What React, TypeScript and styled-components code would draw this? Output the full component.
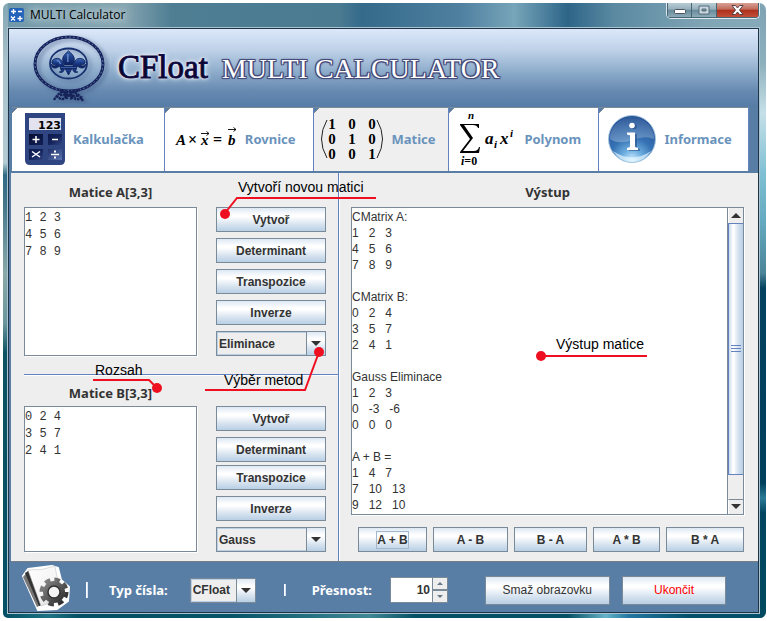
import React from "react";
import styled, { createGlobalStyle, css } from "styled-components";

const sans = '"Liberation Sans", Arial, sans-serif';
const human = '"Noto Sans", Tahoma, sans-serif';
const serif = '"Liberation Serif", "Times New Roman", serif';

const blue = "#587ea6";
const edge = "#7a8a99";
const accent = "#6382bf";
const panel = "#eeeeee";
const ink = "#333333";
const metal = "linear-gradient(180deg, #dde8f3 0%, #ffffff 30%, #ffffff 38%, #dbe6f1 68%, #b8cfe5 100%)";

const GlobalStyle = createGlobalStyle`
  *, *::before, *::after { box-sizing: border-box; }
  body { margin: 0; padding: 3px 1px 2px 3px; background: #fff; font-family: ${sans}; font-size: 12px; color: ${ink}; }
  button, input, select, textarea { font: inherit; color: inherit; margin: 0; border-radius: 0; outline: none; }
`;

const Frame = styled.div`
  padding: 0 6px 4px 4px;
  border-radius: 6px 7px 6px 5px;
  background:
    linear-gradient(180deg, #83a6b4 0, #a9c2cb 60px, #b4cbd2 160px, #2f6b85 172px, #44758b 200px, #8aa9a8 270px, #6a969c 320px, #0c5364 350px, #045064 100%) left / 5px 100% no-repeat,
    linear-gradient(180deg, #7ea3b3 0, #8db0bd 60px, #c5e0e8 110px, #7fc0d4 170px, #63a9bf 220px, #4c8499 270px, #04425f 285px, #01405c 480px, #2a7a97 495px, #024560 510px, #024a60 100%) right / 6px 100% no-repeat,
    linear-gradient(90deg, #045064 0, #1f7285 6%, #045064 10%, #055468 30%, #3f8794 48%, #045064 54%, #045064 74%, #65b3c8 79%, #2377a0 82%, #04506a 90%) bottom / 100% 5px no-repeat,
    linear-gradient(90deg, #6f98a9 0, #86a5b1 16%, #4f7e93 22%, #4a7b91 44%, #356a8b 47%, #4f80a0 60%, #77a5b9 67%, #2d6588 74%, #5a89a1 80%, #80a5b5 92%, #86aaba 100%);
`;

const TitleBar = styled.header`
  display: flex;
  align-items: flex-start;
  height: 24px;
  padding-left: 2px;
`;

const AppIcon = styled.svg`
  width: 15px;
  height: 14px;
  margin: 5px 6px 0 0;
`;

const WindowTitle = styled.span`
  flex: 1;
  font-family: "Open Sans", ${human};
  font-size: 12px;
  line-height: 23px;
  color: #000;
  text-shadow: 0 0 8px #c5d5da, 0 0 8px #c5d5da, 0 0 12px #c5d5da;
`;

const WindowControls = styled.div`
  display: flex;
  height: 16px;
  border: 1px solid #e0eaee;
  border-top: 0;
  border-radius: 0 0 5px 5px;
  overflow: hidden;
`;

const WindowButton = styled.button<{ $close?: boolean }>`
  display: grid;
  place-items: center;
  width: ${(p) => (p.$close ? 42 : 25)}px;
  padding: 0;
  border: 1px solid #466575;
  border-left-width: 0;
  border-top: 0;
  background: ${(p) =>
    p.$close
      ? "linear-gradient(180deg, #d8a095 0, #c06a59 45%, #ac2f1b 50%, #c34f38 100%)"
      : "linear-gradient(180deg, #b8ccd5 0, #96afbb 45%, #67899a 50%, #8cabb8 100%)"};
  &:first-child { border-left-width: 1px; }
`;

const Client = styled.div`
  display: flex;
  flex-direction: column;
  border: 1px solid #1d3547;
  outline: 1px solid #a9c3d0;
  margin: 1px;
  background: ${blue};
`;

const Banner = styled.div`
  display: flex;
  align-items: center;
  height: 78px;
  padding-left: 21px;
  background: linear-gradient(180deg, #dce8fa 0%, #bdd0e7 28%, #8daccb 55%, #6689b0 80%, #567ca6 100%);
`;

const Emblem = styled.svg`
  width: 80px;
  height: 72px;
  margin-right: 8px;
`;

const Brand = styled.h1`
  display: flex;
  align-items: baseline;
  gap: 14px;
  margin: 0;
  font-family: ${serif};
  font-weight: 400;
  line-height: 40px;
  white-space: nowrap;
`;

const BrandName = styled.span`
  font-size: 33px;
  color: #08062a;
  -webkit-text-stroke: 1px #120b45;
  text-shadow: 0 0 2px #fff, 0 0 3px #fff, 0 0 5px #fff, 0 0 7px #e8eeff;
`;

const BrandProduct = styled.span`
  font-size: 28px;
  color: #fff;
  text-shadow:
    1px 0 0 #454a78, -1px 0 0 #454a78, 0 1px 0 #454a78, 0 -1px 0 #454a78,
    1px 1px 0 #454a78, -1px -1px 0 #454a78, 1px -1px 0 #454a78, -1px 1px 0 #454a78,
    0 0 2px #454a78, 0 0 3px #50588a;
`;

const Tabs = styled.nav`
  display: grid;
  grid-template-columns: 153fr 149fr 136fr 150fr 150fr;
  height: 66px;
  padding: 0 9px 2px 3px;
`;

const Tab = styled.button<{ $active?: boolean }>`
  display: flex;
  align-items: center;
  justify-content: center;
  gap: 8px;
  min-width: 0;
  padding: 0 7px 2px 0;
  border: 0;
  border-top: 1px solid ${edge};
  border-right: 1px solid ${accent};
  background: linear-gradient(135deg, ${blue} 0 3px, ${edge} 3px 4px, ${(p) => (p.$active ? "#efefef" : "#fff")} 4px);
  font-family: ${human};
  font-size: 13px;
  font-weight: 700;
  color: #6a93bc;
  white-space: nowrap;
  svg { flex: none; }
`;

const Formula = styled.svg`
  font-family: ${serif};
  font-size: 16px;
  fill: #000;
`;

const Main = styled.main`
  display: grid;
  grid-template-columns: 327fr 2px 418fr;
  margin: 0 0 0 2px;
  background: ${panel};
  border-bottom: 1px solid #777d82;
`;

const Inputs = styled.div`
  position: relative;
  display: flex;
  flex-direction: column;
`;

const Divider = styled.div`
  background: linear-gradient(90deg, ${accent} 50%, #fff 50%);
`;

const Rule = styled.hr`
  width: calc(100% - 13px);
  height: 2px;
  margin: 0 0 0 13px;
  border: 0;
  border-top: 1px solid ${accent};
  border-bottom: 1px solid #fff;
`;

const MatrixSection = styled.section<{ $first?: boolean }>`
  display: grid;
  grid-template-columns: 1fr 110px;
  grid-template-rows: ${(p) => (p.$first ? 34 : 30)}px auto;
  column-gap: 19px;
  padding: 0 12px ${(p) => (p.$first ? 18 : 9)}px 13px;
`;

const Heading = styled.h2`
  margin: 0;
  padding-top: 4px;
  align-self: center;
  text-align: center;
  font-family: ${human};
  font-size: 13px;
  line-height: 24px;
  font-weight: 700;
`;

const MatrixInput = styled.textarea`
  grid-row: 2;
  width: 100%;
  height: 100%;
  padding: 2px 0 0;
  border: 1px solid ${edge};
  box-shadow: 1px 1px 0 #fff;
  background: #fff;
  resize: none;
  overflow: hidden;
  font-family: "Liberation Mono", "Courier New", monospace;
  font-size: 12px;
  line-height: 17px;
`;

const Actions = styled.div<{ $gap: number }>`
  grid-row: 2;
  grid-column: 2;
  display: flex;
  flex-direction: column;
  gap: ${(p) => p.$gap}px;
`;

const ActionGroup = styled.div`
  display: flex;
  flex-direction: column;
  gap: 6px;
`;

const MetalButton = styled.button<{ $wide?: boolean; $danger?: boolean }>`
  height: 25px;
  padding: 0;
  border: 1px solid ${edge};
  background: ${metal};
  font-weight: 700;
  font-size: 12px;
  line-height: 16px;
  ${(p) =>
    p.$wide &&
    css`
      height: 29px;
      padding: 0 17px;
      font-weight: 400;
    `}
  ${(p) =>
    p.$danger &&
    css`
      padding: 0 31px;
      color: #ff0000;
    `}
`;

const FocusBox = styled.span`
  padding: 1px 0;
  border: 1px solid #a3b8cc;
`;

const Combo = styled.label`
  display: grid;
  height: 25px;
  grid-template-columns: 1fr 19px;
  border: 1px solid ${edge};
`;

const ComboSelect = styled.select`
  grid-area: 1 / 1 / 2 / 3;
  appearance: none;
  width: 100%;
  padding: 0 20px 0 1px;
  border: 1px solid #b8cfe5;
  background: ${panel};
  font-weight: 700;
  font-size: 12px;
`;

const ComboArrow = styled.span`
  grid-area: 1 / 2;
  display: grid;
  place-items: center;
  border-left: 1px solid ${edge};
  background: ${metal};
  pointer-events: none;
  z-index: 1;
`;

const OutputPanel = styled.section`
  position: relative;
  display: grid;
  grid-template-rows: 34px 1fr auto;
  padding: 0 14px 9px 11px;
`;

const OutputBox = styled.div`
  display: grid;
  grid-template-columns: 1fr 16px;
  border: 1px solid ${edge};
  box-shadow: 1px 1px 0 #fff;
  background: #fff;
`;

const OutputText = styled.textarea`
  width: 100%;
  height: 100%;
  padding: 1px 0 0;
  border: 0;
  background: none;
  resize: none;
  overflow: hidden;
  font-size: 12px;
  line-height: 16px;
`;

const ScrollBar = styled.div`
  display: grid;
  grid-template-rows: 15px 251fr 24fr 15px;
  border-left: 1px solid ${edge};
  background: ${panel};
`;

const ScrollButton = styled.button`
  display: grid;
  place-items: center;
  padding: 0;
  border: 0;
  border-left: 1px solid #fff;
  background: ${panel};
  &:last-child { border-top: 1px solid ${edge}; }
`;

const ScrollThumb = styled.div`
  display: grid;
  place-items: center;
  border: 1px solid ${accent};
  border-right: 0;
  background: linear-gradient(90deg, #c8daec 0, #ffffff 28%, #fff 34%, #dbe6f2 60%, #b8cfe5 100%);
`;

const Operations = styled.div`
  display: grid;
  grid-template-columns: 69fr 75fr 73fr 67fr 78fr;
  gap: 6px;
  padding: 12px 0 0 7px;
`;

const Notes = styled.svg`
  position: absolute;
  inset: 0;
  width: 100%;
  height: 100%;
  overflow: visible;
  pointer-events: none;
  z-index: 2;
  font-size: 14px;
  polyline { fill: none; stroke: #ee1020; stroke-width: 2; }
  circle { fill: #ee1020; }
  text { fill: #000; }
`;

const Footer = styled.footer`
  display: flex;
  align-items: center;
  height: 50px;
  padding: 6px 32px 0 12px;
  font-family: ${human};
`;

const SettingsIcon = styled.svg`
  flex: none;
  width: 50px;
  height: 48px;
  margin: 0 15px 4px 0;
`;

const Bar = styled.span<{ $tall?: boolean }>`
  width: 2px;
  height: ${(p) => (p.$tall ? 16 : 12)}px;
  background: linear-gradient(90deg, #fff 50%, #d8e6f3 50%);
`;

const Field = styled.div<{ $gap: number }>`
  display: flex;
  align-items: center;
  gap: ${(p) => p.$gap}px;
  margin-left: 26px;
`;

const TypeField = styled(Field)`
  margin: 0 28px 0 21px;
`;

const FieldLabel = styled.label`
  font-size: 13px;
  font-weight: 700;
  color: #fff;
  white-space: nowrap;
`;

const SmallCombo = styled(Combo)`
  width: 66px;
  font-family: ${sans};
`;

const Spinner = styled.div`
  display: grid;
  grid-template-columns: 41px 15px;
  height: 26px;
  border: 1px solid ${edge};
  background: ${edge};
`;

const SpinnerInput = styled.input`
  width: 100%;
  min-width: 0;
  padding: 0 2px 0 0;
  border: 0;
  background: #fff;
  text-align: right;
  font-family: ${sans};
  font-size: 12px;
  font-weight: 700;
`;

const SpinnerButtons = styled.div`
  display: grid;
  grid-template-rows: 1fr 1fr;
  gap: 2px;
  padding-left: 1px;
  button {
    display: grid;
    place-items: center;
    padding: 0;
    border: 0;
    background: ${panel};
  }
`;

const Commands = styled.div`
  display: flex;
  gap: 12px;
  margin-left: auto;
  font-family: ${sans};
`;

const Arrow = ({ up, small }: { up?: boolean; small?: boolean }) => (
  <svg width={small ? 6 : 10} height={small ? 3 : 5} viewBox="0 0 10 5" preserveAspectRatio="none" aria-hidden="true">
    <path d={up ? "M0 5h10L5 0z" : "M0 0h10L5 5z"} fill={small ? "#66788a" : ink} />
  </svg>
);

const EmblemArt = () => (
  <Emblem viewBox="30 31 80 72" aria-hidden="true">
    <defs>
      <filter id="soft" x="-20%" y="-20%" width="150%" height="150%">
        <feDropShadow dx="3" dy="2" stdDeviation="2" floodColor="#37507f" floodOpacity="0.6" />
      </filter>
      <linearGradient id="lily" x1="0" y1="0" x2="0" y2="1">
        <stop offset="0" stopColor="#4068b4" />
        <stop offset="0.5" stopColor="#193a86" />
        <stop offset="1" stopColor="#0d1f5c" />
      </linearGradient>
    </defs>
    <g filter="url(#soft)" fill="none">
      <ellipse cx="69" cy="63" rx="34" ry="27" stroke="#16235a" strokeWidth="3" />
      <ellipse cx="69" cy="63" rx="34" ry="27" stroke="#6a84bb" strokeWidth="1" strokeDasharray="1.6 2.4" />
      <ellipse cx="68.5" cy="62.5" rx="18.5" ry="15" stroke="#17306f" strokeWidth="1.8" />
      <path d="M60 89q4 3 10 2t10-2M54 99q4-7 9-8l13 7q5 1 6-3M83 100q-4-7-9-9l-11 7q-4 0-6-3M66 90l1 8M72 90l-1 9M60 94l19 1" stroke="#16235a" strokeWidth="2.4" strokeDasharray="2.5 .6" />
    </g>
    <g transform="translate(68.500 62) scale(1.24 1) translate(-68.500 -62)">
      <g fill="url(#lily)" stroke="#10245f" strokeWidth="0.8">
        <path d="M68.500 50c5 5 6 8 3 14h-6c-3-6-2-9 3-14z" />
        <path d="M65 65c-1-6-4-9-8-7-4 3-1 7 2 5-1 3-4 2-4 0-1 4 3 5 5 3 2-1 4 0 5 1z" />
        <path d="M72 65c1-6 4-9 8-7 4 3 1 7-2 5 1 3 4 2 4 0 1 4-3 5-5 3-2-1-4 0-5 1z" />
        <path d="M62 65.500h13v2H62zM66 68h5l-2.500 6zM65 68c0 3-2 4-4 3 2 0 2-2 1-3zM72 68c0 3 2 4 4 3-2 0-2-2-1-3z" />
      </g>
      <path d="M68 53v8M59 60q2-1 3 3" fill="none" stroke="#7d9fd8" strokeWidth="0.9" />
    </g>
  </Emblem>
);

const CalculatorArt = () => (
  <svg width="40" height="52" viewBox="0 0 40 52" aria-hidden="true">
    <defs>
      <linearGradient id="key" x1="0" y1="0" x2="1" y2="1">
        <stop offset="0" stopColor="#060d33" />
        <stop offset="0.5" stopColor="#14235c" />
        <stop offset="1" stopColor="#5b74b0" />
      </linearGradient>
    </defs>
    <path d="M0 0h40v47q0 5-5 5H5q-5 0-5-5z" fill="#2e4582" />
    <path d="M4 5h32v12H4z" fill="#e3e2ef" />
    <text x="36" y="15.5" textAnchor="end" fontFamily="DejaVu Sans" fontWeight="700" fontSize="11" fill="#000">123</text>
    <path d="M4 21h14v11H4zM23 21h14v11H23zM4 36h14v11H4zM23 36h14v11H23z" fill="url(#key)" />
    <path d="M11 23v7M7.500 26.500h7M27 26.500h6M7 38.500l8 5.500M7 44l8-5.500M26 41.500h8" stroke="#fff" strokeWidth="1.5" />
    <path d="M29 37.500h2v2h-2zM29 43.500h2v2h-2z" fill="#fff" />
  </svg>
);

const EquationArt = () => (
  <Formula width="62" height="30" viewBox="0 0 62 30" aria-label="A × x = b">
    <g fontStyle="italic" fontWeight="700" fontSize="15">
      <text x="1" y="21">A</text>
      <text x="26" y="21">x</text>
      <text x="53" y="21">b</text>
    </g>
    <text x="13" y="21">×</text>
    <text x="38" y="21">=</text>
    <path d="M26 9.500h8M31.500 7.500l2.500 2-2.500 2M53 5.500h8M58.500 3.500l2.500 2-2.500 2" fill="none" stroke="#000" strokeWidth="0.9" />
  </Formula>
);

const MatrixArt = () => (
  <Formula width="64" height="44" viewBox="0 0 64 44" aria-label="3 × 3">
    <path d="M8 3Q-3 22 8 41M58 3Q69 22 58 41" fill="none" stroke="#222" />
    <g fontSize="15" fontWeight="700" textAnchor="middle">
      {["100", "010", "001"].map((row, r) =>
        row.split("").map((n, c) => (
          <text key={`${r}${c}`} x={13 + c * 20} y={12 + r * 15}>{n}</text>
        ))
      )}
    </g>
  </Formula>
);

const SumArt = () => (
  <Formula width="57" height="58" viewBox="0 0 57 58" aria-label="Σ aᵢxⁱ">
    <path d="M1 14h19v4h-1q-1-3-5-3H5l9 13-10 13h11q4 0 5-4h1l-1 6H1v-1l10-13L1 15z" />
    <g fontStyle="italic" fontWeight="700">
      <text x="9" y="9" fontSize="11">n</text>
      <text x="26" y="34" fontSize="17">a</text>
      <text x="35" y="38" fontSize="11">i</text>
      <text x="41" y="34" fontSize="17">x</text>
      <text x="51" y="27" fontSize="11">i</text>
    </g>
    <text x="2" y="55" fontSize="12" fontWeight="700"><tspan fontStyle="italic">i</tspan>=0</text>
  </Formula>
);

const InfoArt = () => (
  <svg width="48" height="48" viewBox="0 0 48 48" aria-hidden="true">
    <defs>
      <radialGradient id="ball" cx="0.5" cy="0.95" r="0.95">
        <stop offset="0" stopColor="#d5efff" />
        <stop offset="0.22" stopColor="#72b2e2" />
        <stop offset="0.5" stopColor="#3672b4" />
        <stop offset="1" stopColor="#234f92" />
      </radialGradient>
      <linearGradient id="shine" x1="0" y1="0" x2="0" y2="1">
        <stop offset="0" stopColor="#fff" stopOpacity="0.05" />
        <stop offset="1" stopColor="#fff" stopOpacity="0.26" />
      </linearGradient>
    </defs>
    <circle cx="24" cy="24" r="23.5" fill="url(#ball)" stroke="#a6c4df" />
    <path d="M2 24a22 22 0 0 1 44 0q-9-4-22 1T2 24z" fill="url(#shine)" />
    <path d="M5 36q19 13 38 0-7 11-19 11T5 36z" fill="#e6f6ff" opacity="0.7" />
    <g fill="#1c4580" opacity="0.5" transform="translate(2 1)">
      <circle cx="24" cy="10.5" r="2.8" />
      <path d="M19 18h8v14l3 1v2H19v-2l3-1V21l-3-1z" />
    </g>
    <circle cx="24" cy="10.5" r="2.8" fill="#fff" />
    <path d="M19 17.500h8V32l3 1v2H19v-2l3-1V20.500l-3-1z" fill="#fff" />
  </svg>
);

const SettingsArt = () => (
  <SettingsIcon viewBox="0 0 50 48" aria-hidden="true">
    <defs>
      <linearGradient id="gear" gradientUnits="userSpaceOnUse" x1="-12" y1="-12" x2="12" y2="12">
        <stop offset="0" stopColor="#8c8c8c" />
        <stop offset="0.5" stopColor="#5a5a5a" />
        <stop offset="1" stopColor="#222" />
      </linearGradient>
      <linearGradient id="page" x1="0" y1="0" x2="1" y2="1">
        <stop offset="0" stopColor="#fff" />
        <stop offset="0.6" stopColor="#f3f3f3" />
        <stop offset="1" stopColor="#c9c9c9" />
      </linearGradient>
    </defs>
    <path d="M2 12L7 5l24-3 6 2 3 12 8 7-1 14-11 8-19 1z" fill="#fff" stroke="#fff" strokeWidth="2" strokeLinejoin="round" />
    <path d="M2 13l14 30 6-3L7 7z" fill="#777" />
    <path d="M4 9l14 33 5-2L9 6z" fill="#333" />
    <path d="M7 6q14 1 27-4l6 33-20 7z" fill="url(#page)" stroke="#bbb" strokeWidth="0.5" />
    <g transform="translate(33 28)">
      <circle r="11" fill="url(#gear)" />
      <circle r="12.5" fill="none" stroke="url(#gear)" strokeWidth="4" strokeDasharray="5.6 4.217" />
      <circle r="6" fill="#f4f4f4" stroke="#333" strokeWidth="1.5" />
    </g>
  </SettingsIcon>
);

const Select = ({ label, options, small }: { label: string; options: string[]; small?: boolean }) => {
  const Box = small ? SmallCombo : Combo;
  return (
    <Box>
      <ComboSelect aria-label={label}>
        {options.map((o) => (
          <option key={o}>{o}</option>
        ))}
      </ComboSelect>
      <ComboArrow><Arrow /></ComboArrow>
    </Box>
  );
};

const Matrix = ({ name, values, method, first }: { name: string; values: string; method: string[]; first?: boolean }) => (
  <MatrixSection $first={first}>
    <Heading as="label" htmlFor={`matrix-${name}`}>{`Matice ${name}[3,3]`}</Heading>
    <MatrixInput id={`matrix-${name}`} defaultValue={values} spellCheck={false} />
    <Actions $gap={first ? 6 : 3}>
      <ActionGroup>
        <MetalButton>Vytvoř</MetalButton>
        <MetalButton>Determinant</MetalButton>
      </ActionGroup>
      <ActionGroup>
        <MetalButton>Transpozice</MetalButton>
        <MetalButton>Inverze</MetalButton>
        <Select label={`Metoda ${name}`} options={method} />
      </ActionGroup>
    </Actions>
  </MatrixSection>
);

const output = [
  "CMatrix A:", "1   2   3", "4   5   6", "7   8   9", "",
  "CMatrix B:", "0   2   4", "3   5   7", "2   4   1", "",
  "Gauss Eliminace", "1   2   3", "0   -3   -6", "0   0   0", "",
  "A + B =", "1   4   7", "7   10   13", "9   12   10",
].join("\n");

export default function App() {
  return (
    <>
      <GlobalStyle />
      <Frame>
        <TitleBar>
          <AppIcon viewBox="0 0 15 14" aria-hidden="true">
            <rect width="15" height="14" rx="2" fill="#2261b8" />
            <path d="M4.500 1v5M2 3.500h5M9 3.500h4M2 8.500l4 4M6 8.500l-4 4M11 8v5M8.500 10.500h5" stroke="#fff" strokeWidth="1.4" />
          </AppIcon>
          <WindowTitle>MULTI Calculator</WindowTitle>
          <WindowControls>
            <WindowButton aria-label="Minimalizovat">
              <svg width="12" height="8"><rect x=".5" y="3.5" width="11" height="4" rx="1" fill="#fff" stroke="#4a5560" /></svg>
            </WindowButton>
            <WindowButton aria-label="Maximalizovat">
              <svg width="12" height="10"><path d="M1 1h10v8H1zM4 4h4v2H4z" fill="#c9d7de" fillRule="evenodd" stroke="#566d7a" /></svg>
            </WindowButton>
            <WindowButton $close aria-label="Zavřít">
              <svg width="13" height="10"><path d="M1 .5h3.500l2 2.500 2-2.500H12L8.500 5 12 9.500H8.500l-2-2.500-2 2.500H1L4.500 5z" fill="#fff" stroke="#564048" /></svg>
            </WindowButton>
          </WindowControls>
        </TitleBar>
        <Client>
          <Banner>
            <EmblemArt />
            <Brand>
              <BrandName>CFloat</BrandName>
              <BrandProduct>MULTI CALCULATOR</BrandProduct>
            </Brand>
          </Banner>
          <Tabs>
            <Tab><CalculatorArt />Kalkulačka</Tab>
            <Tab><EquationArt />Rovnice</Tab>
            <Tab $active><MatrixArt />Matice</Tab>
            <Tab><SumArt />Polynom</Tab>
            <Tab><InfoArt />Informace</Tab>
          </Tabs>
          <Main>
            <Inputs>
              <Matrix first name="A" values={"1 2 3\n4 5 6\n7 8 9"} method={["Eliminace", "Gauss"]} />
              <Rule />
              <Matrix name="B" values={"0 2 4\n3 5 7\n2 4 1"} method={["Gauss", "Eliminace"]} />
              <Notes>
                <polyline points="365,25 226,25 214,40" />
                <circle cx="214" cy="41" r="5" />
                <text x="227" y="19">Vytvoří novou matici</text>
                <polyline points="82,207 138,207 146,215" />
                <circle cx="146" cy="215" r="5" />
                <text x="84" y="202">Rozsah</text>
                <polyline points="194,217 294,217 308,179" />
                <circle cx="308" cy="179" r="5" />
                <text x="213" y="212">Výběr metod</text>
              </Notes>
            </Inputs>
            <Divider />
            <OutputPanel>
              <Heading as="label" htmlFor="output">Výstup</Heading>
              <OutputBox>
                <OutputText id="output" readOnly value={output} />
                <ScrollBar>
                  <ScrollButton aria-label="Nahoru"><Arrow up /></ScrollButton>
                  <ScrollThumb>
                    <svg width="10" height="7" aria-hidden="true"><path d="M0 .5h10M0 3.500h10M0 6.500h10" stroke={accent} /></svg>
                  </ScrollThumb>
                  <span />
                  <ScrollButton aria-label="Dolů"><Arrow /></ScrollButton>
                </ScrollBar>
              </OutputBox>
              <Operations>
                <MetalButton><FocusBox>A + B</FocusBox></MetalButton>
                <MetalButton>A - B</MetalButton>
                <MetalButton>B - A</MetalButton>
                <MetalButton>A * B</MetalButton>
                <MetalButton>B * A</MetalButton>
              </Operations>
              <Notes>
                <polyline points="201,183 307,183" />
                <circle cx="201" cy="183" r="5" />
                <text x="216" y="176">Výstup matice</text>
              </Notes>
            </OutputPanel>
          </Main>
          <Footer>
            <SettingsArt />
            <Bar $tall />
            <TypeField $gap={22}>
              <FieldLabel as="span">Typ čísla:</FieldLabel>
              <Select small label="Typ čísla" options={["CFloat"]} />
            </TypeField>
            <Bar />
            <Field $gap={18}>
              <FieldLabel htmlFor="precision">Přesnost:</FieldLabel>
              <Spinner>
                <SpinnerInput id="precision" defaultValue="10" />
                <SpinnerButtons>
                  <button aria-label="Zvýšit"><Arrow up small /></button>
                  <button aria-label="Snížit"><Arrow small /></button>
                </SpinnerButtons>
              </Spinner>
            </Field>
            <Commands>
              <MetalButton $wide>Smaž obrazovku</MetalButton>
              <MetalButton $wide $danger>Ukončit</MetalButton>
            </Commands>
          </Footer>
        </Client>
      </Frame>
    </>
  );
}
